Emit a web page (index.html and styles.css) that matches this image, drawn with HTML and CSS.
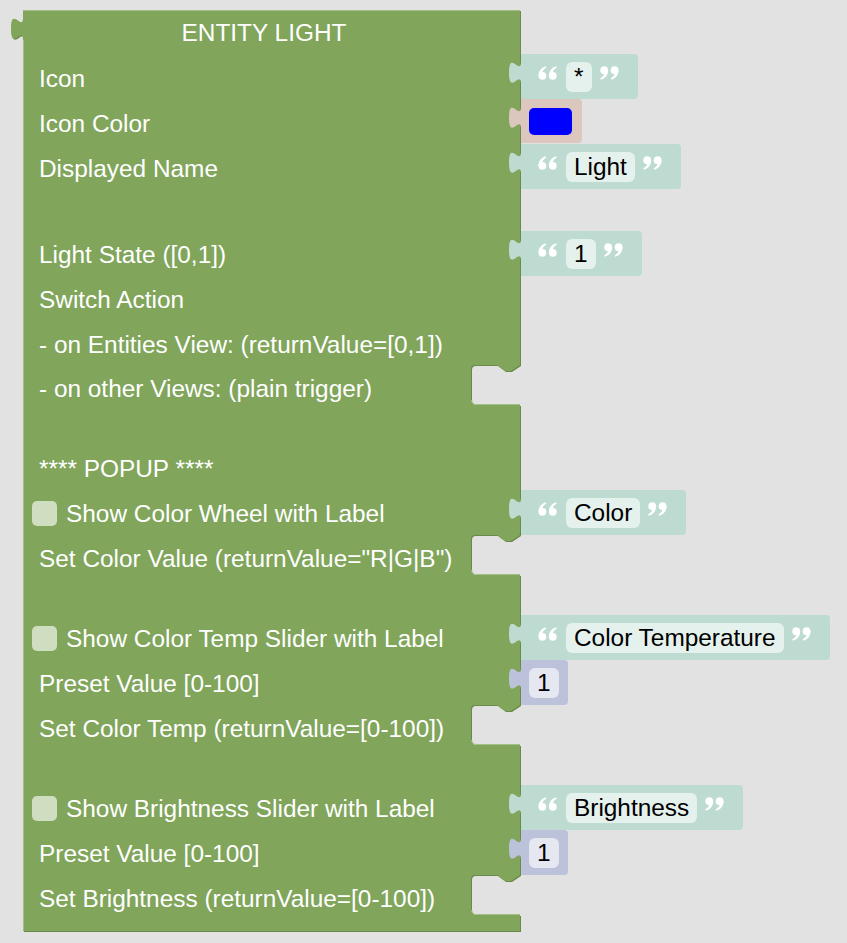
FILE: index.html
```html
<!DOCTYPE html>
<html>
<head>
<meta charset="utf-8">
<title>Entity Light</title>
<link rel="stylesheet" href="styles.css">
</head>
<body>
<svg class="defs" width="0" height="0" aria-hidden="true">
  <defs>
    <g id="mark">
      <circle cx="4.4" cy="9.8" r="3.9"/>
      <path d="M0.5,10 C0.3,5.4 2.8,1.9 7.7,0.2 L8.4,1.6 C5.3,3.4 4,5.6 4.4,7.6 Z"/>
    </g>
    <g id="qopen">
      <use href="#mark"/>
      <use href="#mark" x="10.4"/>
    </g>
  </defs>
</svg>
<div class="workspace">
  <svg class="shape" width="847" height="943" viewBox="0 0 847 943">
    <path class="shape-dark" transform="translate(1,1)" d="M23,10 H520 V365 L511,371 L505,371 L497,365 H475 Q471,365 471,369 V399 Q471,405 477,405 H520 V535 L511,541 L505,541 L497,535 H475 Q471,535 471,539 V569 Q471,575 477,575 H520 V705 L511,711 L505,711 L497,705 H475 Q471,705 471,709 V739 Q471,745 477,745 H520 V875 L511,881 L505,881 L497,875 H475 Q471,875 471,879 V909 Q471,915 477,915 H520 V931 H23 V40 c0,-15 -12,12 -12,-11.25 s12,3.75 12,-11.25 Z"/>
    <path class="shape-main" d="M23,10 H520 V365 L511,371 L505,371 L497,365 H475 Q471,365 471,369 V399 Q471,405 477,405 H520 V535 L511,541 L505,541 L497,535 H475 Q471,535 471,539 V569 Q471,575 477,575 H520 V705 L511,711 L505,711 L497,705 H475 Q471,705 471,709 V739 Q471,745 477,745 H520 V875 L511,881 L505,881 L497,875 H475 Q471,875 471,879 V909 Q471,915 477,915 H520 V931 H23 V40 c0,-15 -12,12 -12,-11.25 s12,3.75 12,-11.25 Z"/>
    <path class="shape-light" d="M23,10.5 H519.5 M23.5,40 V930.5 M471.5,400 Q471.5,404.5 477,404.5 H520 M471.5,570 Q471.5,574.5 477,574.5 H520 M471.5,740 Q471.5,744.5 477,744.5 H520 M471.5,910 Q471.5,914.5 477,914.5 H520"/>
  </svg>

  <div class="block">
    <div class="row title">ENTITY LIGHT</div>

    <div class="row">
      <span class="label label-top">Icon</span>
      <div class="input str">
        <svg class="tab" width="14" height="24" viewBox="0 0 14 24"><path d="M14,0.5 H13 c0,15 -12,-12 -12,11.25 s12,-3.75 12,11.25 H14 Z"/></svg>
        <svg class="quote" width="19" height="14" viewBox="0 0 19 14"><use href="#qopen"/></svg>
        <span class="fld">*</span>
        <svg class="quote quote-close" width="19" height="14" viewBox="0 0 19 14"><use href="#qopen" transform="rotate(180 9.5 7)"/></svg>
      </div>
    </div>

    <div class="row">
      <span class="label label-top">Icon Color</span>
      <div class="input colour">
        <svg class="tab" width="14" height="24" viewBox="0 0 14 24"><path d="M14,0.5 H13 c0,15 -12,-12 -12,11.25 s12,-3.75 12,11.25 H14 Z"/></svg>
        <span class="swatch"></span>
      </div>
    </div>

    <div class="row">
      <span class="label label-top">Displayed Name</span>
      <div class="input str">
        <svg class="tab" width="14" height="24" viewBox="0 0 14 24"><path d="M14,0.5 H13 c0,15 -12,-12 -12,11.25 s12,-3.75 12,11.25 H14 Z"/></svg>
        <svg class="quote" width="19" height="14" viewBox="0 0 19 14"><use href="#qopen"/></svg>
        <span class="fld">Light</span>
        <svg class="quote quote-close" width="19" height="14" viewBox="0 0 19 14"><use href="#qopen" transform="rotate(180 9.5 7)"/></svg>
      </div>
    </div>

    <div class="spacer-lg"></div>

    <div class="row">
      <span class="label">Light State ([0,1])</span>
      <div class="input str">
        <svg class="tab" width="14" height="24" viewBox="0 0 14 24"><path d="M14,0.5 H13 c0,15 -12,-12 -12,11.25 s12,-3.75 12,11.25 H14 Z"/></svg>
        <svg class="quote" width="19" height="14" viewBox="0 0 19 14"><use href="#qopen"/></svg>
        <span class="fld">1</span>
        <svg class="quote quote-close" width="19" height="14" viewBox="0 0 19 14"><use href="#qopen" transform="rotate(180 9.5 7)"/></svg>
      </div>
    </div>

    <div class="row"><span class="label">Switch Action</span></div>
    <div class="row"><span class="label">- on Entities View: (returnValue=[0,1])</span></div>
    <div class="row row-short"><span class="label">- on other Views: (plain trigger)</span></div>

    <div class="spacer"></div>

    <div class="row"><span class="label">**** POPUP ****</span></div>

    <div class="row">
      <span class="label check-label"><span class="check"></span>Show Color Wheel with Label</span>
      <div class="input str">
        <svg class="tab" width="14" height="24" viewBox="0 0 14 24"><path d="M14,0.5 H13 c0,15 -12,-12 -12,11.25 s12,-3.75 12,11.25 H14 Z"/></svg>
        <svg class="quote" width="19" height="14" viewBox="0 0 19 14"><use href="#qopen"/></svg>
        <span class="fld">Color</span>
        <svg class="quote quote-close" width="19" height="14" viewBox="0 0 19 14"><use href="#qopen" transform="rotate(180 9.5 7)"/></svg>
      </div>
    </div>
    <div class="row"><span class="label">Set Color Value (returnValue="R|G|B")</span></div>

    <div class="spacer"></div>

    <div class="row">
      <span class="label check-label"><span class="check"></span>Show Color Temp Slider with Label</span>
      <div class="input str">
        <svg class="tab" width="14" height="24" viewBox="0 0 14 24"><path d="M14,0.5 H13 c0,15 -12,-12 -12,11.25 s12,-3.75 12,11.25 H14 Z"/></svg>
        <svg class="quote" width="19" height="14" viewBox="0 0 19 14"><use href="#qopen"/></svg>
        <span class="fld">Color Temperature</span>
        <svg class="quote quote-close" width="19" height="14" viewBox="0 0 19 14"><use href="#qopen" transform="rotate(180 9.5 7)"/></svg>
      </div>
    </div>
    <div class="row">
      <span class="label">Preset Value [0-100]</span>
      <div class="input num">
        <svg class="tab" width="14" height="24" viewBox="0 0 14 24"><path d="M14,0.5 H13 c0,15 -12,-12 -12,11.25 s12,-3.75 12,11.25 H14 Z"/></svg>
        <span class="fld">1</span>
      </div>
    </div>
    <div class="row"><span class="label">Set Color Temp (returnValue=[0-100])</span></div>

    <div class="spacer"></div>

    <div class="row">
      <span class="label check-label"><span class="check"></span>Show Brightness Slider with Label</span>
      <div class="input str">
        <svg class="tab" width="14" height="24" viewBox="0 0 14 24"><path d="M14,0.5 H13 c0,15 -12,-12 -12,11.25 s12,-3.75 12,11.25 H14 Z"/></svg>
        <svg class="quote" width="19" height="14" viewBox="0 0 19 14"><use href="#qopen"/></svg>
        <span class="fld">Brightness</span>
        <svg class="quote quote-close" width="19" height="14" viewBox="0 0 19 14"><use href="#qopen" transform="rotate(180 9.5 7)"/></svg>
      </div>
    </div>
    <div class="row">
      <span class="label">Preset Value [0-100]</span>
      <div class="input num">
        <svg class="tab" width="14" height="24" viewBox="0 0 14 24"><path d="M14,0.5 H13 c0,15 -12,-12 -12,11.25 s12,-3.75 12,11.25 H14 Z"/></svg>
        <span class="fld">1</span>
      </div>
    </div>
    <div class="row"><span class="label">Set Brightness (returnValue=[0-100])</span></div>
  </div>
</div>
</body>
</html>
```

FILE: styles.css
```css
html, body {
  margin: 0;
  padding: 0;
  background: #e2e2e2;
}

body {
  font-family: "Liberation Sans", Arial, sans-serif;
}

.defs {
  position: absolute;
  width: 0;
  height: 0;
}

.workspace {
  position: relative;
  width: 847px;
  height: 943px;
  padding: 10px 0 0 23px;
  box-sizing: border-box;
  overflow: hidden;
}

.shape {
  position: absolute;
  left: 0;
  top: 0;
}

.shape-dark {
  fill: #6a8a4b;
}

.shape-main {
  fill: #80a55b;
}

.shape-light {
  fill: none;
  stroke: #a3bf87;
  stroke-width: 1;
}

.block {
  position: relative;
  display: flex;
  flex-direction: column;
  font-size: 24.4px;
  color: #ffffff;
}

.row {
  display: flex;
  align-items: center;
  height: 45px;
}

.row-short {
  height: 44px;
}

.title {
  height: 44px;
  width: 497px;
  padding: 2px 15px 0 0;
  box-sizing: border-box;
  justify-content: center;
}

.spacer-lg {
  height: 42px;
}

.spacer {
  height: 35px;
}

.label {
  flex: 0 0 498px;
  box-sizing: border-box;
  padding-left: 16px;
  padding-top: 2px;
  white-space: nowrap;
}

.label-top {
  padding-top: 4px;
}

.check-label {
  display: flex;
  align-items: center;
  gap: 9px;
  padding-left: 9px;
}

.check {
  width: 25px;
  height: 25px;
  border-radius: 5px;
  background: rgba(255, 255, 255, 0.62);
  flex: 0 0 auto;
}

.input {
  position: relative;
  display: flex;
  align-items: center;
  align-self: flex-start;
  height: 45px;
  box-sizing: border-box;
  border-radius: 0 4px 4px 0;
}

.tab {
  position: absolute;
  left: -13px;
  top: 7px;
  overflow: visible;
}

.str {
  background: #bddbd1;
  padding: 0 19px 0 17px;
}

.str .tab path {
  fill: #bddbd1;
}

.quote {
  flex: 0 0 auto;
  fill: #ffffff;
  margin: 0 9px 7px 0;
}

.quote-close {
  margin: 0 0 7px 8px;
}

.colour {
  background: #dbc7bd;
  height: 44px;
  padding: 0 10px 0 8px;
}

.colour .tab path {
  fill: #dbc7bd;
}

.num {
  background: #bdc2db;
  padding: 0 9px 0 8px;
}

.num .tab path {
  fill: #bdc2db;
}

.fld {
  display: flex;
  align-items: center;
  justify-content: center;
  height: 30px;
  padding: 0 8px;
  border-radius: 6px;
  background: rgba(255, 255, 255, 0.6);
  color: #000000;
  font-size: 24.4px;
  white-space: nowrap;
}

.swatch {
  width: 43px;
  height: 27px;
  border-radius: 5px;
  background: #0000ff;
}
```
